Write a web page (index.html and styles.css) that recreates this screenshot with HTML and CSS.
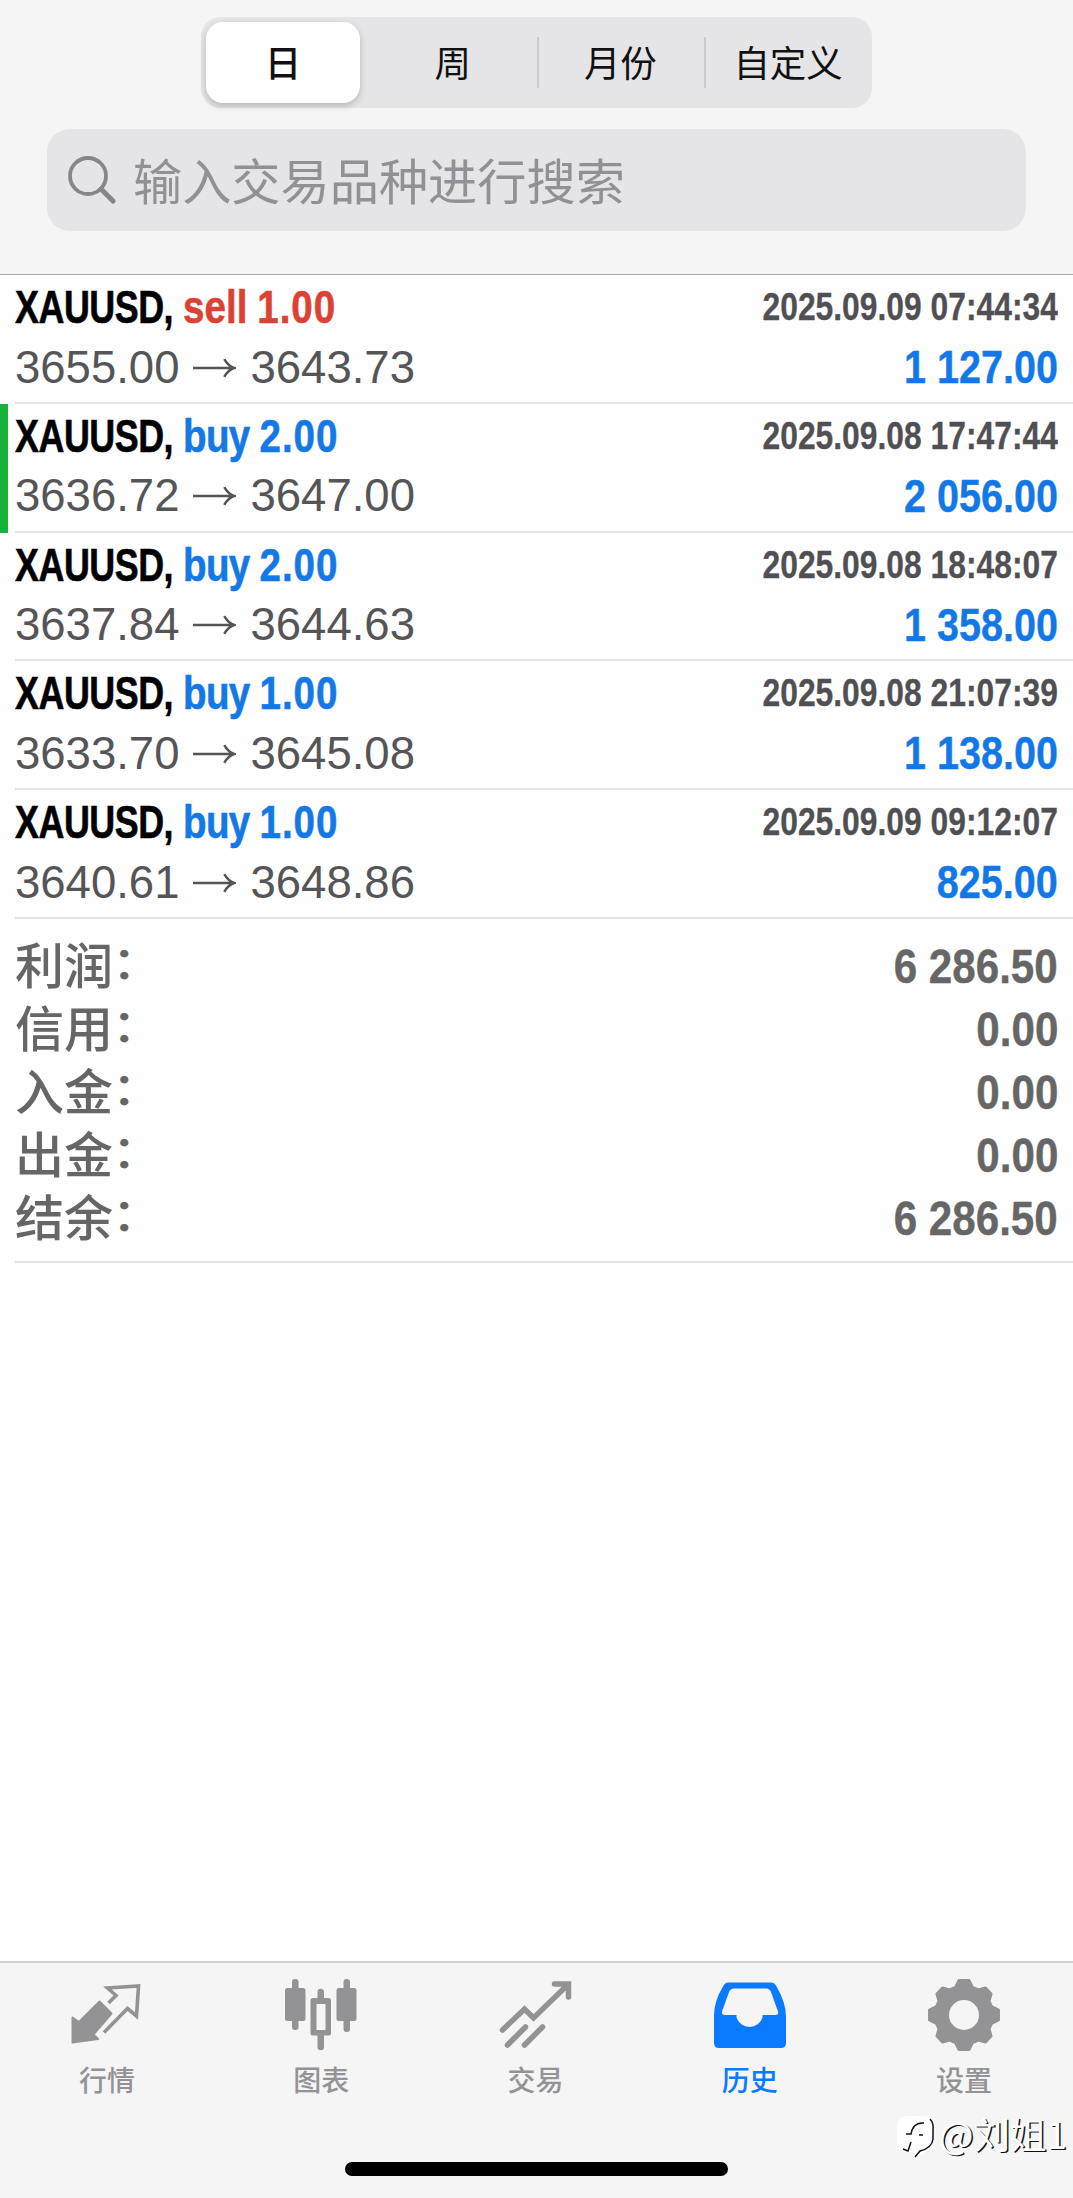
FILE: index.html
```html
<!DOCTYPE html>
<html lang="zh-CN">
<head>
<meta charset="utf-8">
<title>历史</title>
<link rel="stylesheet" href="styles.css">
</head>
<body>
<div class="app">
  <header class="header">
    <div class="segments">
      <div class="segment active"><span>日</span></div>
      <div class="segment"><span>周</span></div>
      <div class="segment divided"><span>月份</span></div>
      <div class="segment divided"><span>自定义</span></div>
    </div>
    <div class="search">
      <svg class="search-icon" width="48" height="50" viewBox="0 0 48 50" fill="none" stroke="#85858a"><circle cx="20" cy="21" r="18" stroke-width="3.8"/><path d="M33 34L45 46" stroke-width="5" stroke-linecap="round"/></svg>
      <span>输入交易品种进行搜索</span>
    </div>
  </header>
  <main class="content">
    <section class="deal">
      <div class="line"><div class="title"><span class="symbol">XAUUSD,</span><span class="side sell">sell</span><span class="lots sell">1.00</span></div><time class="date">2025.09.09 07:44:34</time></div>
      <div class="line"><div class="prices"><span>3655.00</span><svg class="arrow" viewBox="0 0 44 20"><path d="M0 10H42M32 1Q36 8 42 10Q36 12 32 19"/></svg><span>3643.73</span></div><div class="profit">1 127.00</div></div>
    </section>
    <section class="deal marked">
      <div class="line"><div class="title"><span class="symbol">XAUUSD,</span><span class="side buy">buy</span><span class="lots">2.00</span></div><time class="date">2025.09.08 17:47:44</time></div>
      <div class="line"><div class="prices"><span>3636.72</span><svg class="arrow" viewBox="0 0 44 20"><path d="M0 10H42M32 1Q36 8 42 10Q36 12 32 19"/></svg><span>3647.00</span></div><div class="profit">2 056.00</div></div>
    </section>
    <section class="deal">
      <div class="line"><div class="title"><span class="symbol">XAUUSD,</span><span class="side buy">buy</span><span class="lots">2.00</span></div><time class="date">2025.09.08 18:48:07</time></div>
      <div class="line"><div class="prices"><span>3637.84</span><svg class="arrow" viewBox="0 0 44 20"><path d="M0 10H42M32 1Q36 8 42 10Q36 12 32 19"/></svg><span>3644.63</span></div><div class="profit">1 358.00</div></div>
    </section>
    <section class="deal">
      <div class="line"><div class="title"><span class="symbol">XAUUSD,</span><span class="side buy">buy</span><span class="lots">1.00</span></div><time class="date">2025.09.08 21:07:39</time></div>
      <div class="line"><div class="prices"><span>3633.70</span><svg class="arrow" viewBox="0 0 44 20"><path d="M0 10H42M32 1Q36 8 42 10Q36 12 32 19"/></svg><span>3645.08</span></div><div class="profit">1 138.00</div></div>
    </section>
    <section class="deal">
      <div class="line"><div class="title"><span class="symbol">XAUUSD,</span><span class="side buy">buy</span><span class="lots">1.00</span></div><time class="date">2025.09.09 09:12:07</time></div>
      <div class="line"><div class="prices"><span>3640.61</span><svg class="arrow" viewBox="0 0 44 20"><path d="M0 10H42M32 1Q36 8 42 10Q36 12 32 19"/></svg><span>3648.86</span></div><div class="profit">825.00</div></div>
    </section>
    <dl class="summary">
      <div class="total"><dt>利润<span class="colon">：</span></dt><dd>6 286.50</dd></div>
      <div class="total"><dt>信用<span class="colon">：</span></dt><dd>0.00</dd></div>
      <div class="total"><dt>入金<span class="colon">：</span></dt><dd>0.00</dd></div>
      <div class="total"><dt>出金<span class="colon">：</span></dt><dd>0.00</dd></div>
      <div class="total"><dt>结余<span class="colon">：</span></dt><dd>6 286.50</dd></div>
    </dl>
  </main>
  <nav class="tabs">
    <a class="tab">
      <svg class="tab-icon" viewBox="0 -4.5 72 72"><path fill="currentColor" stroke="currentColor" stroke-width="2" stroke-linejoin="round" d="M28.500 18L40.500 30L22.500 51L27 55.500L1.500 59V34L8 38.500Z"/><path fill="none" stroke="currentColor" stroke-width="3.600" d="M37.500 19.500L45 12L36.500 4.500L67.500 2.500L65.500 32.500L56.500 25L33 49"/></svg>
      <span>行情</span>
    </a>
    <a class="tab">
      <svg class="tab-icon" viewBox="0 0 72 72" fill="currentColor"><rect x="0" y="9" width="20.500" height="33" rx="2.500"/><rect x="7" y="0" width="6.500" height="51" rx="3"/><rect x="51.500" y="9" width="20" height="33" rx="2.500"/><rect x="58.500" y="0" width="6.500" height="53" rx="3"/><path fill-rule="evenodd" d="M32.500 19V13a3.250 3.250 0 0 1 6.500 0V19H43.500Q46 19 46 21.500V54Q46 56.500 43.500 56.500H39V68a3.250 3.250 0 0 1-6.500 0V56.500H28Q25.500 56.500 25.500 54V21.500Q25.500 19 28 19ZM31.500 25V51H40.500V25Z"/></svg>
      <span>图表</span>
    </a>
    <a class="tab">
      <svg class="tab-icon" viewBox="0.5 -1 72 72" fill="none" stroke="currentColor" stroke-width="5.500" stroke-linecap="round"><path d="M3 50L25 29L34 38L68 5M55 4H69V17M8 65L26 47M25 65L43 47"/></svg>
      <span>交易</span>
    </a>
    <a class="tab current">
      <svg class="tab-icon" viewBox="0 -2 72 72" fill="currentColor" fill-rule="evenodd"><path d="M14 1.500H57Q60.500 1.500 62.500 5.500Q72 22 72 35V62Q72 67 67 67H5Q0 67 0 62V35Q0 20 9 5.500Q11 1.500 14 1.500ZM20 7.500Q16.500 7.500 15 11L8 30.500Q7.500 34 11 34H22.500V36.500A13.500 13 0 0 0 48.500 36.500V34H61Q65 34 64 30.500L57 11Q55.500 7.500 52.500 7.500Z"/></svg>
      <span>历史</span>
    </a>
    <a class="tab">
      <svg class="tab-icon" viewBox="0 0 72 72"><path fill="currentColor" fill-rule="evenodd" stroke="currentColor" stroke-width="3" stroke-linejoin="round" d="M31 1.500H41L44.500 8.500L50.500 11L57.500 9L63 15L61 22L63.500 27.500L70.500 31V41L63.500 44.500L61 50L63 57L57.500 63L50.500 61L44.500 63.500L41 70.500H31L27.500 63.500L21.500 61L14.500 63L9 57L11 50L8.500 44.500L1.500 41V31L8.500 27.500L11 22L9 15L14.500 9L21.500 11L27.500 8.500ZM36 19.500A16.500 16.500 0 1 0 36 52.500A16.500 16.500 0 1 0 36 19.500Z"/></svg>
      <span>设置</span>
    </a>
  </nav>
  <div class="watermark">
    <svg width="38" height="44" viewBox="0 0 38 44"><path fill="#fff" d="M11 2H27Q37 3 37 12V24Q36 37 20 42L17 38H10Q0 37 0 28V12Q1 2 11 2Z"/><path fill="none" stroke="#111" stroke-width="1.500" d="M9 20H14Q16 8 27 9M22 21H26M33 5Q37 9 36 17V25Q35 34 23 37L18 43M14 28L11 37L6 35"/></svg>
    <span>@刘姐1</span>
  </div>
  <div class="home-indicator"></div>
</div>
</body>
</html>
```
FILE: styles.css
```css
* { box-sizing: border-box; }
body {
  margin: 0;
  background: #fefefe;
  font-family: "Liberation Sans", "Noto Sans CJK SC", sans-serif;
}
.app {
  position: relative;
  display: flex;
  flex-direction: column;
  width: 1073px;
  height: 2198px;
  overflow: hidden;
}
.header {
  height: 275px;
  padding: 17px 47px 0;
  background: #f5f5f6;
  border-bottom: 1px solid #a8a8aa;
  font-family: "Noto Sans CJK SC", sans-serif;
}
.segments {
  display: grid;
  grid-template-columns: repeat(4, 1fr);
  width: 671px;
  height: 91px;
  margin-left: 154px;
  border-radius: 20px;
  background: #e5e5e7;
}
.segment {
  display: flex;
  align-items: center;
  justify-content: center;
  padding-bottom: 3px;
  font-size: 36.5px;
  color: #111;
}
.segment.active {
  margin: 5px 9px 5px 5px;
  border-radius: 17px;
  background: #fff;
  font-weight: 500;
  box-shadow: 0 3px 7px rgba(0, 0, 0, .2);
}
.segment.divided {
  background: linear-gradient(#cbcbce, #cbcbce) left 20px / 2px 51px no-repeat;
}
.search {
  display: flex;
  align-items: center;
  gap: 17px;
  height: 102px;
  margin-top: 21px;
  padding-left: 21px;
  border-radius: 23px;
  background: #e5e5e7;
  color: #909095;
  font-size: 49.2px;
  line-height: 98px;
}
.search span { padding-bottom: 3px; }
.content { flex: 1; }
.deal {
  height: 128.8px;
  margin-left: 15px;
  padding: 2px 15px 0 0;
  border-bottom: 2px solid #e3e3e4;
}
.deal.marked {
  margin-left: 0;
  padding-left: 15px;
  background: linear-gradient(#18b13c, #18b13c) left top / 8px 100% no-repeat;
  border-image: linear-gradient(90deg, #18b13c 8px, transparent 8px, transparent 15px, #e3e3e4 15px) 0 0 2;
}
.line {
  display: flex;
  justify-content: space-between;
  height: 61px;
  line-height: 60px;
}
.title, .date, .profit, .total dd {
  font-weight: 700;
  white-space: pre;
  transform-origin: right center;
}
.title {
  display: flex;
  font-size: 47px;
  color: #1478e6;
  transform: scaleX(.82);
  transform-origin: left center;
  -webkit-text-stroke: .6px currentColor;
}
.symbol {
  width: 205px;
  color: #000;
  letter-spacing: -.6px;
  transform: scaleX(.93);
  transform-origin: left center;
}
.side { margin-right: 12px; }
.side.buy { letter-spacing: -.8px; }
.lots { letter-spacing: 1.2px; }
.sell { color: #dc4234; }
.date { font-size: 38px; color: #505054; transform: scaleX(.837); -webkit-text-stroke: .3px currentColor; }
.prices { display: flex; align-items: center; font-size: 45.500px; color: #555558; }
.arrow { width: 43px; height: 20px; margin: 0 14.5px 0 13.5px; fill: none; stroke: #555558; stroke-width: 2.5; }
.profit { font-size: 47px; color: #1278e8; transform: scaleX(.842); -webkit-text-stroke: .4px currentColor; }
.line + .line { position: relative; top: -1px; }
.summary {
  height: 344px;
  margin: 0 0 0 15px;
  padding: 15px 15px 0 0;
  border-bottom: 2px solid #e3e3e4;
}
.total {
  display: flex;
  justify-content: space-between;
  height: 63px;
  line-height: 63px;
  font-size: 49px;
  color: #666;
}
.total dt {
  height: 63px;
  font-family: "Noto Sans CJK SC", sans-serif;
  font-weight: 500;
  line-height: 57px;
}
.colon { display: inline-block; transform: translate(-1px, -3px) scaleY(.9); }
.total dd { margin: 0; line-height: 65px; transform: scaleX(.86); -webkit-text-stroke: .4px currentColor; }
.tabs {
  display: flex;
  height: 237px;
  border-top: 2px solid #d2d2d4;
  background: #f5f5f6;
  padding-right: 2px;
}
.tab {
  display: flex;
  flex: 1;
  flex-direction: column;
  align-items: center;
  padding-top: 16px;
  color: #939395;
  font: 500 28px/40px "Noto Sans CJK SC", sans-serif;
}
.tab span { margin-top: 8px; }
.tab-icon { width: 72px; height: 72px; overflow: visible; }
.tab.current { color: #0a7aff; }
.watermark {
  position: absolute;
  left: 897px;
  top: 2114px;
  display: flex;
  align-items: center;
  gap: 4px;
  white-space: nowrap;
  color: #fff;
  font: 36.500px/48px "Noto Sans CJK SC", sans-serif;
  text-shadow: 1.5px 1px 0 #111;
}
.watermark span { margin-top: -5px; }
.home-indicator {
  position: absolute;
  left: 345px;
  top: 2162px;
  width: 383px;
  height: 14px;
  border-radius: 7px;
  background: #000;
}
```
